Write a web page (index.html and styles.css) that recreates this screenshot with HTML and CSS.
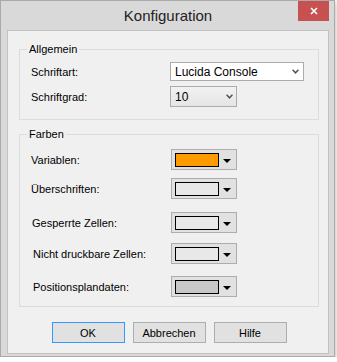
FILE: index.html
```html
<!DOCTYPE html>
<html lang="de">
<head>
    <meta charset="UTF-8">
    <title>Konfiguration</title>
    <link rel="stylesheet" href="styles.css">
</head>
<body>

    <div class="window">
        <div class="titlebar">
            <span class="title">Konfiguration</span>
            <div class="close">
                <svg width="8" height="8" viewBox="0 0 8 8">
                    <path d="M1 1 L7 7 M7 1 L1 7" stroke="#fff" stroke-width="1.6" fill="none"/>
                </svg>
            </div>
        </div>

        <div class="client">
            <!-- Allgemein -->
            <fieldset class="group group-general">
                <legend>Allgemein</legend>
                <div class="row">
                    <label>Schriftart:</label>
                    <div class="combo combo-font">
                        <span>Lucida Console</span>
                        <svg class="chevron" width="7" height="5" viewBox="0 0 7 5">
                            <polyline points="0.6,0.8 3.5,3.8 6.4,0.8" stroke="#555" stroke-width="1.5" fill="none"/>
                        </svg>
                    </div>
                </div>
                <div class="row">
                    <label>Schriftgrad:</label>
                    <div class="combo combo-size">
                        <span>10</span>
                        <svg class="chevron" width="7" height="5" viewBox="0 0 7 5">
                            <polyline points="0.6,0.8 3.5,3.8 6.4,0.8" stroke="#555" stroke-width="1.5" fill="none"/>
                        </svg>
                    </div>
                </div>
            </fieldset>

            <!-- Farben -->
            <fieldset class="group group-colors">
                <legend>Farben</legend>
                <div class="row">
                    <label>Variablen:</label>
                    <div class="color-btn"><span class="swatch swatch-orange"></span><span class="tri"></span></div>
                </div>
                <div class="row">
                    <label>Überschriften:</label>
                    <div class="color-btn"><span class="swatch swatch-light"></span><span class="tri"></span></div>
                </div>
                <div class="row">
                    <label class="nudge-1">Gesperrte Zellen:</label>
                    <div class="color-btn"><span class="swatch swatch-light"></span><span class="tri"></span></div>
                </div>
                <div class="row">
                    <label class="nudge-2">Nicht druckbare Zellen:</label>
                    <div class="color-btn"><span class="swatch swatch-light"></span><span class="tri"></span></div>
                </div>
                <div class="row">
                    <label class="nudge-2">Positionsplandaten:</label>
                    <div class="color-btn"><span class="swatch swatch-gray"></span><span class="tri"></span></div>
                </div>
            </fieldset>

            <div class="buttons">
                <button class="btn btn-default">OK</button>
                <button class="btn">Abbrechen</button>
                <button class="btn">Hilfe</button>
            </div>
        </div>
    </div>

</body>
</html>
```

FILE: styles.css
```css
body {
    margin: 0;
    background-color: #fff;
    font-family: "Liberation Sans", Arial, sans-serif;
    font-size: 11px;
    color: #000;
}
.window {
    width: 335px;
    height: 357px;
    box-sizing: border-box;
    border: 1px solid #aaa;
    background-color: #d9d9d9;
    padding: 0 5px 0 6px;
    box-shadow: 1px 2px 5px rgba(0, 0, 0, 0.25);
}
.titlebar {
    height: 29px;
    display: grid;
    grid-template-columns: 1fr auto 1fr;
}
.title {
    grid-column: 2;
    line-height: 29px;
    font-size: 15px;
    color: #222;
}
.close {
    grid-column: 3;
    justify-self: end;
    width: 31px;
    height: 20px;
    background-color: #c75050;
    display: flex;
    justify-content: center;
    align-items: center;
}
.client {
    height: 324px;
    box-sizing: border-box;
    border: 1px solid #c2c2c2;
    background-color: #f0f0f0;
    padding: 11px 9px 0 11px;
}
.group {
    margin: 0;
    padding: 0;
    border: 1px solid #dcdcdc;
    min-width: 0;
}
.group legend {
    margin-left: 7px;
    padding: 0 2px;
    line-height: 15px;
}
.group-general {
    padding: 5px 0 12px;
}
.group-colors {
    margin-top: 7px;
    padding: 7px 0 9px;
}
.row {
    display: grid;
    grid-template-columns: 139px auto;
    align-items: center;
    padding-left: 11px;
}
.group-general .row + .row {
    margin-top: 5px;
}
.group-colors .row {
    grid-template-columns: 140px auto;
}
.group-colors .row:nth-of-type(2) { margin-top: 8px; }
.group-colors .row:nth-of-type(3) { margin-top: 13px; }
.group-colors .row:nth-of-type(4) { margin-top: 10px; }
.group-colors .row:nth-of-type(5) { margin-top: 12px; }
.nudge-1 {
    margin-left: 1px;
}
.nudge-2 {
    margin-left: 2px;
}
.combo {
    box-sizing: border-box;
    border: 1px solid #acacac;
    display: flex;
    align-items: center;
    justify-content: space-between;
    padding: 0 4px 0 4px;
    font-size: 12px;
}
.combo-font {
    width: 134px;
    height: 19px;
    background-color: #fff;
}
.combo-size {
    width: 67px;
    height: 21px;
    background: linear-gradient(#f2f2f2, #e5e5e5);
    padding-right: 3px;
}
.color-btn {
    width: 66px;
    height: 21px;
    box-sizing: border-box;
    border: 1px solid #adadad;
    background-color: #e1e1e1;
    display: flex;
    align-items: flex-start;
    padding: 3px 3px 0;
}
.swatch {
    width: 44px;
    height: 14px;
    box-sizing: border-box;
    border: 1px solid #000;
}
.swatch-orange {
    background-color: #ff9a00;
}
.swatch-light {
    background-color: #e8e8e8;
}
.swatch-gray {
    background-color: #c8c8c8;
}
.tri {
    align-self: center;
    margin-left: 4px;
    width: 0;
    height: 0;
    border-left: 4px solid transparent;
    border-right: 4px solid transparent;
    border-top: 4px solid #000;
}
.buttons {
    margin-top: 15px;
    display: flex;
    justify-content: center;
    gap: 8px;
}
.btn {
    width: 73px;
    height: 21px;
    border: 1px solid #adadad;
    background-color: #e1e1e1;
    font-family: "Liberation Sans", Arial, sans-serif;
    font-size: 11px;
    color: #000;
    padding: 0;
}
.btn-default {
    border-color: #3399ff;
}
```
